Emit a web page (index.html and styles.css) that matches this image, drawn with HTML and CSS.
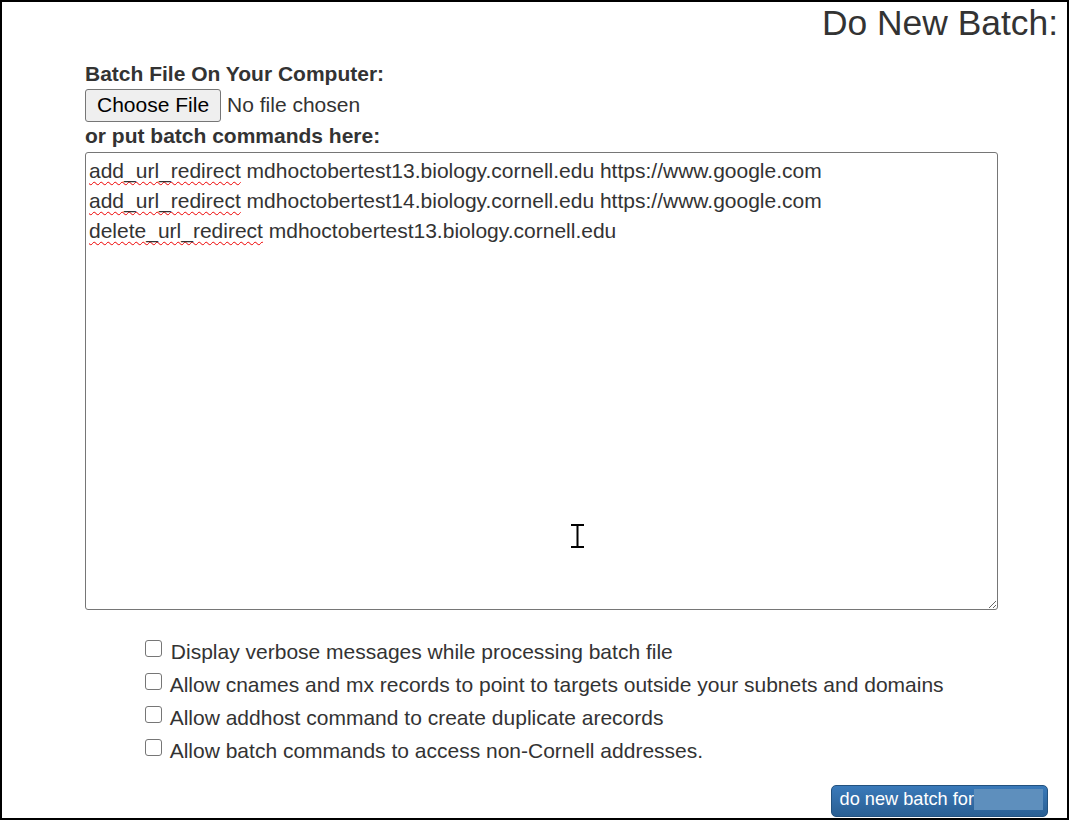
FILE: index.html
```html
<!DOCTYPE html>
<html lang="en">
<head>
    <meta charset="UTF-8">
    <meta name="viewport" content="width=device-width, initial-scale=1.0">
    <title>Do New Batch</title>

    <link rel="stylesheet" href="styles.css">
</head>
<body>
    <div class="marco">
        <h2 class="titulo">Do New Batch:</h2>

        <form class="lote" onsubmit="return false;">
            <label class="etiqueta" for="archivo">Batch File On Your Computer:</label>
            <div class="fila-archivo">
                <input type="file" id="archivo" class="archivo">
            </div>

            <label class="etiqueta">or put batch commands here:</label>
            <div class="comandos"><span class="error">add_url_redirect</span> mdhoctobertest13.biology.cornell.edu https://www.google.com
<span class="error">add_url_redirect</span> mdhoctobertest14.biology.cornell.edu https://www.google.com
<span class="error">delete_url_redirect</span> mdhoctobertest13.biology.cornell.edu</div>

            <!-- Opciones del lote -->
            <div class="opciones">
                <label class="opcion"><input type="checkbox"> Display verbose messages while processing batch file</label>
                <label class="opcion"><input type="checkbox"> Allow cnames and mx records to point to targets outside your subnets and domains</label>
                <label class="opcion"><input type="checkbox"> Allow addhost command to create duplicate arecords</label>
                <label class="opcion"><input type="checkbox"> Allow batch commands to access non-Cornell addresses.</label>
            </div>

            <div class="acciones">
                <button class="enviar" type="submit">do new batch for<span class="oculto"></span></button>
            </div>
        </form>

        <!-- Cursor de texto sobre el area -->
        <svg class="cursor" width="16" height="26" viewBox="0 0 16 26">
            <path d="M1 2 H14 M1 24 H14 M7.5 2 V24" stroke="#000" stroke-width="2" fill="none"/>
        </svg>
    </div>
</body>
</html>
```

FILE: styles.css
```css
body {
    margin: 0;
    background-color: #fff;
    font-family: "Liberation Sans", Arial, sans-serif;
    color: #333;
}

.marco {
    position: relative;
    box-sizing: border-box;
    width: 1069px;
    height: 820px;
    border: 2px solid #000;
    padding-top: 1px;
    overflow: hidden;
}

.titulo {
    margin: 0;
    padding-right: 9px;
    text-align: right;
    font-size: 35.4px;
    font-weight: normal;
    line-height: 40px;
}

.lote {
    margin-top: 19px;
    padding-left: 83px;
}

.etiqueta {
    display: block;
    font-size: 21px;
    font-weight: bold;
    line-height: 24px;
}

.fila-archivo {
    padding: 3px 0 2.5px;
}

.archivo {
    font-family: "Liberation Sans", Arial, sans-serif;
    font-size: 21px;
    color: #333;
}

.archivo::file-selector-button {
    font-family: "Liberation Sans", Arial, sans-serif;
    font-size: 21px;
    color: #000;
    height: 32.7px;
    padding: 0 11px;
    margin-right: 6px;
    background-color: #efefef;
    border: 1px solid #767676;
    border-radius: 3px;
}

.comandos {
    box-sizing: border-box;
    width: 913px;
    height: 458px;
    margin-top: 4px;
    padding: 2.5px 3px 0;
    border: 1px solid #767676;
    border-radius: 3px;
    font-size: 21px;
    line-height: 30px;
    white-space: pre-wrap;
    resize: both;
    overflow: auto;
}

.error {
    text-decoration: underline wavy #e00;
    text-decoration-thickness: 1.4px;
    text-underline-offset: 3px;
}

.opciones {
    margin-top: 24.4px;
    padding-left: 55px;
}

.opcion {
    display: block;
    font-size: 21px;
    line-height: 33.3px;
}

.opcion input {
    appearance: none;
    box-sizing: border-box;
    width: 17px;
    height: 17px;
    margin: 3px 3px 3px 5px;
    vertical-align: -1px;
    background-color: #fff;
    border: 1.4px solid #767676;
    border-radius: 3px;
}

.acciones {
    display: flex;
    justify-content: flex-end;
    margin-top: 17.4px;
    padding-right: 19px;
}

.enviar {
    font-family: "Liberation Sans", Arial, sans-serif;
    font-size: 18.2px;
    line-height: 21px;
    color: #fff;
    padding: 3px 4px 6px 8px;
    background: linear-gradient(#3a7aba, #2a5f93);
    border: 1px solid #23527f;
    border-radius: 5px;
    cursor: pointer;
}

.oculto {
    display: inline-block;
    width: 69px;
    height: 21px;
    vertical-align: top;
    background-color: #5e8fbd;
}

.cursor {
    position: absolute;
    left: 568px;
    top: 521px;
}
```
